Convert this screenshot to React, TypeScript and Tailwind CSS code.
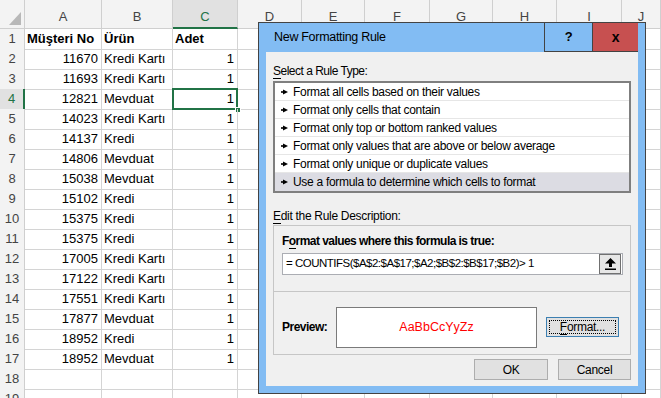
import React from 'react';

const rows: [string, string, string][] = [
  ['11670', 'Kredi Kartı', '1'],
  ['11693', 'Kredi Kartı', '1'],
  ['12821', 'Mevduat', '1'],
  ['14023', 'Kredi Kartı', '1'],
  ['14137', 'Kredi', '1'],
  ['14806', 'Mevduat', '1'],
  ['15038', 'Mevduat', '1'],
  ['15102', 'Kredi', '1'],
  ['15375', 'Kredi', '1'],
  ['15375', 'Kredi', '1'],
  ['17005', 'Kredi Kartı', '1'],
  ['17122', 'Kredi Kartı', '1'],
  ['17551', 'Kredi Kartı', '1'],
  ['17877', 'Mevduat', '1'],
  ['18952', 'Kredi', '1'],
  ['18952', 'Mevduat', '1'],
];

const colLetters = ['A', 'B', 'C', 'D', 'E', 'F', 'G', 'H', 'I', 'J'];

const ruleTypes = [
  'Format all cells based on their values',
  'Format only cells that contain',
  'Format only top or bottom ranked values',
  'Format only values that are above or below average',
  'Format only unique or duplicate values',
  'Use a formula to determine which cells to format',
];

const gridCols =
  'grid grid-cols-[25px_77px_71px_65px_64px_63px_65px_63px_64px_65px_1fr]';

const Bullet = () => (
  <svg width="7" height="6" viewBox="0 0 7 6" className="shrink-0">
    <rect x="0" y="2.2" width="3" height="1.6" fill="#000" />
    <polygon points="2,0.5 7,3 2,5.5" fill="#000" />
  </svg>
);

const Sheet = () => {
  const blank = Array.from({ length: 7 });
  return (
    <div className="text-[13px] text-black" style={{ fontFamily: '"Liberation Sans", Arial, sans-serif' }}>
      {/* Column headers */}
      <div className={`${gridCols} h-[29px]`}>
        <div className="bg-[#f3f3f3] border-r border-b border-[#cfcfcf] flex items-end justify-end pr-[3px] pb-[3px]">
          <svg width="12" height="13" viewBox="0 0 12 13">
            <polygon points="12,0 12,13 0,13" fill="#b8b8b8" />
          </svg>
        </div>
        {colLetters.map((c) =>
          c === 'C' ? (
            <div key={c} className="bg-[#e1e1e1] border-r border-[#cfcfcf] border-b-2 border-b-[#217346] flex items-center justify-center pt-[6px] text-[#217346]">
              {c}
            </div>
          ) : (
            <div key={c} className="bg-[#f3f3f3] border-r border-b border-[#cfcfcf] flex items-center justify-center pt-[6px] text-[#444]">
              {c}
            </div>
          )
        )}
      </div>

      {/* Header row 1 */}
      <div className={`${gridCols} h-[20px]`}>
        <div className="bg-[#f3f3f3] border-r border-b border-[#cfcfcf] flex items-center justify-center text-[#444]">1</div>
        <div className="border-r border-b border-[#d4d4d4] flex items-center pl-[2px] font-bold">Müşteri No</div>
        <div className="border-r border-b border-[#d4d4d4] flex items-center pl-[2px] font-bold">Ürün</div>
        <div className="border-r border-b border-[#d4d4d4] flex items-center pl-[2px] font-bold">Adet</div>
        {blank.map((_, i) => (
          <div key={i} className="border-r border-b border-[#d4d4d4]" />
        ))}
      </div>

      {rows.map(([no, urun, adet], i) => {
        const n = i + 2;
        const sel = n === 4;
        return (
          <div key={n} className={`${gridCols} h-[20px]`}>
            {sel ? (
              <div className="bg-[#e1e1e1] border-b border-[#cfcfcf] border-r-2 border-r-[#217346] flex items-center justify-center text-[#217346]">{n}</div>
            ) : (
              <div className="bg-[#f3f3f3] border-r border-b border-[#cfcfcf] flex items-center justify-center text-[#444]">{n}</div>
            )}
            <div className="border-r border-b border-[#d4d4d4] flex items-center justify-end pr-[3px]">{no}</div>
            <div className="border-r border-b border-[#d4d4d4] flex items-center pl-[2px] whitespace-nowrap">{urun}</div>
            <div className="relative border-r border-b border-[#d4d4d4] flex items-center justify-end pr-[3px]">
              {adet}
              {sel && (
                <>
                  <div className="absolute left-[-1px] top-[-1px] right-[-1px] bottom-[-1px] border-2 border-[#217346]" />
                  <div className="absolute right-[-4px] bottom-[-4px] w-[6px] h-[6px] bg-[#217346] border border-white" />
                </>
              )}
            </div>
            {blank.map((_, j) => (
              <div key={j} className="border-r border-b border-[#d4d4d4]" />
            ))}
          </div>
        );
      })}

      {[18, 19].map((n) => (
        <div key={n} className={`${gridCols} h-[20px]`}>
          <div className="bg-[#f3f3f3] border-r border-b border-[#cfcfcf] flex items-center justify-center text-[#444]">{n}</div>
          {Array.from({ length: 10 }).map((_, j) => (
            <div key={j} className="border-r border-b border-[#d4d4d4]" />
          ))}
        </div>
      ))}
    </div>
  );
};

const Dialog = () => (
  <div
    className="absolute left-[258px] top-[22px] w-[388px] h-[372px] border border-[#434343] bg-[#82bcf3] flex flex-col text-[12px] tracking-[-0.3px] text-black"
    style={{ fontFamily: '"Liberation Sans", Arial, sans-serif' }}
  >
    {/* Title bar */}
    <div className="h-[29px] flex">
      <div className="flex-1 flex items-center pl-[15px] text-[12.5px]">New Formatting Rule</div>
      <div className="w-[48px] border-l border-b border-[#434343] flex items-center justify-center font-bold text-[13px]">?</div>
      <div className="w-[46px] bg-[#c75050] border-l border-b border-[#434343] flex items-center justify-center font-bold text-[14px]">x</div>
      <div className="w-[7px]" />
    </div>

    {/* Body */}
    <div className="mx-[7px] h-[334px] bg-[#f0f0f0] flex flex-col px-[7px]">
      <div className="mt-[11px] h-[16px] leading-[16px] tracking-[-0.5px]">
        <u className="no-underline border-b border-black">S</u>elect a Rule Type:
      </div>

      <div className="mt-[2px] w-[358px] border-2 border-[#7f7f7f] bg-white flex flex-col">
        {ruleTypes.map((r, i) => (
          <div
            key={r}
            className={`h-[18px] flex items-center gap-[5px] pl-[6px] ${i === 5 ? 'bg-[#dcdce3]' : 'border-b border-[#e6e6e6]'}`}
          >
            <Bullet />
            <span className="whitespace-nowrap">{r}</span>
          </div>
        ))}
      </div>

      <div className="mt-[15px] h-[16px] leading-[16px]">
        <u className="no-underline border-b border-black">E</u>dit the Rule Description:
      </div>

      <div className="mt-[1px] w-[358px] h-[130px] border border-[#c6c6c6] flex flex-col">
        <div className="h-[66px] border-b border-[#c6c6c6] px-[8px] flex flex-col">
          <div className="mt-[7px] h-[16px] leading-[16px] font-bold tracking-[-0.55px]">
            F<u className="no-underline border-b border-black">o</u>rmat values where this formula is true:
          </div>
          <div className="mt-[4px] w-[341px] h-[22px] bg-white border border-[#abadb3] flex items-center">
            <div className="flex-1 pl-[3px] whitespace-nowrap text-[11.5px] tracking-[-0.5px]">= COUNTIFS($A$2:$A$17;$A2;$B$2:$B$17;$B2)&gt; 1</div>
            <div className="w-[22px] h-[20px] mr-[1px] border border-[#707070] bg-[#e6e6e6] flex items-center justify-center">
              <svg width="11" height="12" viewBox="0 0 11 12">
                <polygon points="5.5,0 11,5.5 7,5.5 7,9 4,9 4,5.5 0,5.5" fill="#000" />
                <rect x="0" y="10.5" width="11" height="1.5" fill="#000" />
              </svg>
            </div>
          </div>
        </div>
        <div className="flex-1 flex items-center pl-[8px]">
          <div className="w-[54px] font-bold mt-[8px] tracking-[-0.5px]">Preview:</div>
          <div className="w-[201px] h-[41px] mt-[8px] bg-white border border-[#7a7a7a] flex items-center justify-center text-[#ff0000] text-[12.5px] tracking-normal">
            AaBbCcYyZz
          </div>
          <div className="ml-[9px] mt-[7px] w-[73px] h-[20px] border border-[#3c7fb1] bg-[#e1e1e1] p-[2px]">
            <div className="w-full h-full border border-dotted border-black flex items-center justify-center">
              <span>
                <u className="no-underline border-b border-black">F</u>ormat...
              </span>
            </div>
          </div>
        </div>
      </div>

      <div className="mt-[4px] flex justify-end gap-[10px]">
        <div className="w-[74px] h-[21px] border border-[#adadad] bg-[#e1e1e1] flex items-center justify-center">OK</div>
        <div className="w-[73px] h-[21px] border border-[#adadad] bg-[#e1e1e1] flex items-center justify-center">Cancel</div>
      </div>
    </div>
  </div>
);

export default function App() {
  return (
    <div className="relative w-[661px] h-[398px] overflow-hidden bg-white">
      <Sheet />
      <Dialog />
    </div>
  );
}
